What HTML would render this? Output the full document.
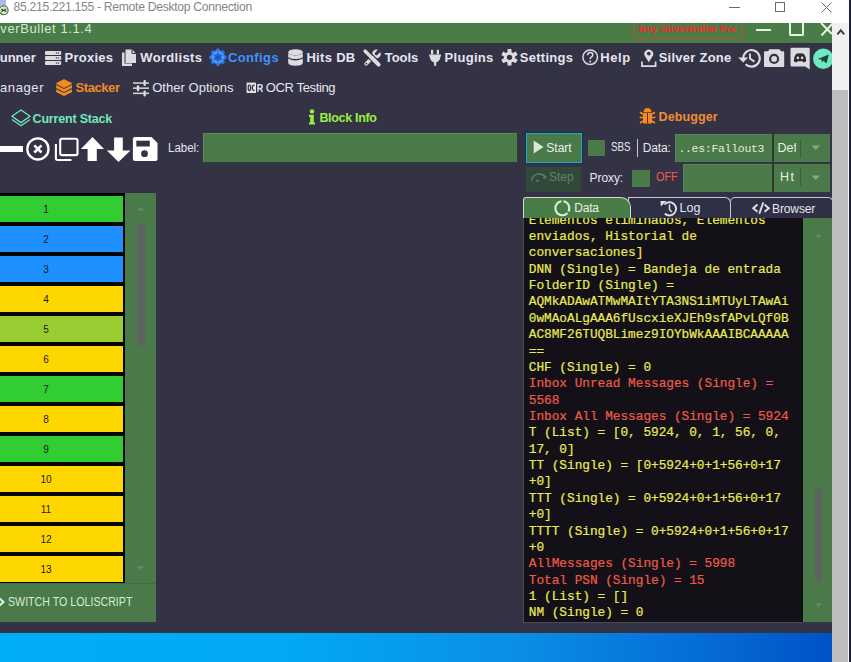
<!DOCTYPE html>
<html><head><meta charset="utf-8">
<style>
*{margin:0;padding:0;box-sizing:border-box}
html,body{width:851px;height:662px;overflow:hidden;background:#343345;font-family:"Liberation Sans",sans-serif}
.a{position:absolute}
.t{position:absolute;white-space:pre;line-height:1}
svg{position:absolute;overflow:visible}
#data{position:absolute;left:523px;top:218px;width:280px;height:405px;background:#131117;overflow:hidden;border-left:1px solid #4a4a56;border-bottom:1px solid #4a4a56}
#data .ln{position:absolute;left:4.8px;-webkit-text-stroke:0.2px currentColor;font-family:"Liberation Mono",monospace;font-size:12.8px;white-space:pre;line-height:1;color:#eaea58;letter-spacing:-0.04px}
#data .r{color:#ee5a4a}
.row{position:absolute;left:0;width:123px;height:26px;color:#1a1a1a;font-size:10px;line-height:26px}
.row span{position:absolute;left:46px;top:1px;transform:translateX(-50%)}
</style></head>
<body>
<!-- RDP title bar -->
<div class="a" style="left:0;top:0;width:851px;height:23px;background:#fff"></div>
<svg style="left:0;top:0" width="12" height="16" viewBox="0 0 12 16">
 <rect x="-1" y="-1" width="7" height="6.5" fill="#a9b9ea"/>
 <circle cx="3.6" cy="10.2" r="4.5" fill="#d4ecc4" stroke="#4a524a" stroke-width="1.1"/>
 <path d="M1.4 9 L3.2 10.3 L1.4 11.6 M6 9 L4.2 10.3 L6 11.6" stroke="#206420" stroke-width="1.3" fill="none"/>
</svg>
<div class="t" style="left:13.5px;top:1.25px;font-size:12.17px;letter-spacing:-0.293px;font-family:'Liberation Sans',sans-serif;font-weight:normal;color:#858585">85.215.221.155 - Remote Desktop Connection</div>
<div class="a" style="left:729px;top:7px;width:11px;height:1px;background:#6a6a6a"></div>
<div class="a" style="left:775px;top:2px;width:10px;height:10px;border:1px solid #6a6a6a"></div>
<svg style="left:821px;top:2px" width="11" height="11" viewBox="0 0 11 11"><path d="M0.5 0.5 L10.5 10.5 M10.5 0.5 L0.5 10.5" stroke="#6a6a6a" stroke-width="1"/></svg>

<!-- green app title -->
<div class="a" style="left:0;top:23px;width:832px;height:20px;background:#4a7c48"></div>
<div class="t" style="left:0.3px;top:21.75px;font-size:13.0px;letter-spacing:0.6px;font-family:'Liberation Sans',sans-serif;font-weight:normal;color:#d2ead2">verBullet 1.1.4</div>
<div class="a" style="left:632.5px;top:23px;width:110.5px;height:16px;border:1px solid #a85a3a;border-top:none"></div><div class="a" style="left:635px;top:23px;width:105.5px;height:13.5px;border:1px solid #7a6a40;border-top:none;opacity:.7"></div>
<div class="t" style="left:638.7px;top:23.53px;font-size:9.5px;letter-spacing:0.332px;font-family:'Liberation Sans',sans-serif;font-weight:bold;color:#e8302a;-webkit-text-stroke:0.25px #e8302a">Buy SilverBullet Pro</div>
<div class="a" style="left:756px;top:29px;width:15px;height:2px;background:#e4f4e4"></div>
<div class="a" style="left:789px;top:23px;width:15px;height:12.5px;border:2px solid #e4f4e4;border-top:none;border-radius:0 0 2px 2px"></div>
<svg style="left:821px;top:23px" width="11" height="13" viewBox="0 0 11 13"><path d="M0.5 12.5 L12 0 M0 0 L11 11" stroke="#e4f4e4" stroke-width="2"/></svg>

<!-- nav bar icons -->
<svg style="left:45px;top:51px" width="16" height="14" viewBox="0 0 16 14">
 <rect x="0" y="0" width="16.2" height="3.9" rx="1" fill="#dcdce0"/>
 <rect x="0" y="5" width="16.2" height="3.9" rx="1" fill="#dcdce0"/>
 <rect x="0" y="10" width="16.2" height="3.9" rx="1" fill="#dcdce0"/>
 <g fill="#4a4a55"><circle cx="11.5" cy="2" r=".8"/><circle cx="13.5" cy="2" r=".8"/><circle cx="11.5" cy="7" r=".8"/><circle cx="13.5" cy="7" r=".8"/><circle cx="11.5" cy="12" r=".8"/><circle cx="13.5" cy="12" r=".8"/></g>
</svg>
<div class="t" style="left:-9.7px;top:50.65px;font-size:13.0px;letter-spacing:0.0px;font-family:'Liberation Sans',sans-serif;font-weight:bold;color:#e6e6ee">Runner</div><div class="t" style="left:64.6px;top:50.65px;font-size:13.0px;letter-spacing:0.25px;font-family:'Liberation Sans',sans-serif;font-weight:bold;color:#e6e6ee">Proxies</div>
<svg style="left:121px;top:49px" width="16" height="18" viewBox="0 0 16 18">
 <path d="M1 3.5 H3.5 V14.5 H11 V17 H1 Z" fill="#dcdce0"/>
 <path d="M4.5 0.5 H11 L15 4.5 V14 H4.5 Z" fill="#dcdce0"/>
 <path d="M11 0.5 V4.5 H15" fill="none" stroke="#343345" stroke-width="1"/>
</svg>
<div class="t" style="left:140.3px;top:50.65px;font-size:13.0px;letter-spacing:0.337px;font-family:'Liberation Sans',sans-serif;font-weight:bold;color:#e6e6ee">Wordlists</div>
<svg style="left:209px;top:48px" width="18" height="19" viewBox="0 0 18 19">
 <g transform="translate(8.9,9.2)">
  <circle r="7.3" fill="#2c7cf0"/>
  <g fill="#2c7cf0">
   <rect x="-1.5" y="-8.6" width="3" height="3" transform="rotate(0)"/>
   <rect x="-1.5" y="-8.6" width="3" height="3" transform="rotate(45)"/>
   <rect x="-1.5" y="-8.6" width="3" height="3" transform="rotate(90)"/>
   <rect x="-1.5" y="-8.6" width="3" height="3" transform="rotate(135)"/>
   <rect x="-1.5" y="-8.6" width="3" height="3" transform="rotate(180)"/>
   <rect x="-1.5" y="-8.6" width="3" height="3" transform="rotate(225)"/>
   <rect x="-1.5" y="-8.6" width="3" height="3" transform="rotate(270)"/>
   <rect x="-1.5" y="-8.6" width="3" height="3" transform="rotate(315)"/>
  </g>
  <circle r="5" fill="none" stroke="#5eaaff" stroke-width="1.4"/>
  <circle r="2.2" fill="#1a55c0"/>
  <path d="M0 -5 V5 M-4.3 -2.5 L4.3 2.5 M-4.3 2.5 L4.3 -2.5" stroke="#1a55c0" stroke-width="1.1"/>
 </g>
</svg>
<div class="t" style="left:227.9px;top:50.65px;font-size:13.0px;letter-spacing:0.4px;font-family:'Liberation Sans',sans-serif;font-weight:bold;color:#3b94ff">Configs</div>
<svg style="left:288px;top:49px" width="15" height="17" viewBox="0 0 15 17">
 <ellipse cx="7.5" cy="3.2" rx="7.3" ry="3" fill="#dcdce0"/>
 <path d="M0.2 4.5 Q7.5 8.5 14.8 4.5 V8.2 Q7.5 12 0.2 8.2 Z" fill="#dcdce0"/>
 <path d="M0.2 9.5 Q7.5 13.3 14.8 9.5 V13.5 Q14.8 16.8 7.5 16.8 Q0.2 16.8 0.2 13.5 Z" fill="#dcdce0"/>
</svg>
<div class="t" style="left:306.4px;top:50.65px;font-size:13.0px;letter-spacing:0.317px;font-family:'Liberation Sans',sans-serif;font-weight:bold;color:#e6e6ee">Hits DB</div>
<svg style="left:363px;top:49px" width="19" height="18" viewBox="0 0 19 18">
 <path d="M11.5 6.5 L3.2 14.8" stroke="#dcdce0" stroke-width="3.7" stroke-linecap="round"/>
 <circle cx="3.4" cy="14.6" r=".9" fill="#343345"/>
 <circle cx="13.4" cy="5" r="4.4" fill="#dcdce0"/>
 <path d="M13.4 4.6 L18.5 -0.5" stroke="#343345" stroke-width="3.2" stroke-linecap="round"/>
 <path d="M5.5 5.5 L12.5 12.5" stroke="#343345" stroke-width="6.4"/>
 <path d="M2 2 L9 9" stroke="#dcdce0" stroke-width="3.2" stroke-linecap="round"/>
 <path d="M8.5 8.5 L15.6 15.6" stroke="#dcdce0" stroke-width="4" stroke-linecap="round"/>
</svg>
<div class="t" style="left:384.7px;top:50.65px;font-size:13.0px;letter-spacing:-0.025px;font-family:'Liberation Sans',sans-serif;font-weight:bold;color:#e6e6ee">Tools</div>
<svg style="left:429px;top:49px" width="13" height="17" viewBox="0 0 13 17">
 <rect x="2" y="0.8" width="2.2" height="4.5" fill="#dcdce0"/>
 <rect x="7.8" y="0.8" width="2.2" height="4.5" fill="#dcdce0"/>
 <path d="M0 5.5 H12.2 L10.5 11 Q8.5 13.5 6.1 13.5 Q3.7 13.5 1.7 11 Z" fill="#dcdce0"/>
 <rect x="5.1" y="12" width="2.1" height="4.8" fill="#dcdce0"/>
</svg>
<div class="t" style="left:444.5px;top:50.65px;font-size:13.0px;letter-spacing:0.317px;font-family:'Liberation Sans',sans-serif;font-weight:bold;color:#e6e6ee">Plugins</div>
<svg style="left:501px;top:49px" width="17" height="17" viewBox="0 0 17 17">
 <g transform="translate(8.5,8.3)">
  <circle r="5.6" fill="#dcdce0"/>
  <g fill="#dcdce0">
   <rect x="-2" y="-8.3" width="4" height="4" rx=".5"/>
   <rect x="-2" y="-8.3" width="4" height="4" rx=".5" transform="rotate(60)"/>
   <rect x="-2" y="-8.3" width="4" height="4" rx=".5" transform="rotate(120)"/>
   <rect x="-2" y="-8.3" width="4" height="4" rx=".5" transform="rotate(180)"/>
   <rect x="-2" y="-8.3" width="4" height="4" rx=".5" transform="rotate(240)"/>
   <rect x="-2" y="-8.3" width="4" height="4" rx=".5" transform="rotate(300)"/>
  </g>
  <circle r="2.6" fill="#343345"/>
 </g>
</svg>
<div class="t" style="left:519.8px;top:50.65px;font-size:13.0px;letter-spacing:0.257px;font-family:'Liberation Sans',sans-serif;font-weight:bold;color:#e6e6ee">Settings</div>
<svg style="left:582px;top:49px" width="17" height="17" viewBox="0 0 17 17">
 <circle cx="8.2" cy="8.2" r="7.3" fill="none" stroke="#dcdce0" stroke-width="1.5"/>
 <path d="M5.6 6.2 Q5.8 3.5 8.3 3.5 Q10.8 3.5 10.8 5.8 Q10.8 7.3 9.2 8.2 Q8.2 8.8 8.2 10.2" fill="none" stroke="#dcdce0" stroke-width="1.5"/>
 <circle cx="8.2" cy="12.4" r="1" fill="#dcdce0"/>
</svg>
<div class="t" style="left:600.3px;top:50.65px;font-size:13.0px;letter-spacing:0.6px;font-family:'Liberation Sans',sans-serif;font-weight:bold;color:#e6e6ee">Help</div>
<svg style="left:641px;top:48px" width="17" height="20" viewBox="0 0 17 20">
 <path d="M7.8 14.3 L4.2 8.6 A4.4 4.4 0 1 1 11.4 8.6 Z" fill="#dcdce0"/>
 <circle cx="7.8" cy="5.6" r="1.9" fill="#343345"/>
 <path d="M0.9 13.6 V18.2 H14.6 V13.6" fill="none" stroke="#dcdce0" stroke-width="1.7"/>
</svg>
<div class="t" style="left:658.7px;top:50.65px;font-size:13.0px;letter-spacing:0.25px;font-family:'Liberation Sans',sans-serif;font-weight:bold;color:#e6e6ee">Silver Zone</div>
<svg style="left:737px;top:48px" width="24" height="21" viewBox="0 0 24 21">
 <path d="M6.2 10 A8.3 8.3 0 1 1 8.6 16.2" fill="none" stroke="#dcdce0" stroke-width="2.1"/>
 <path d="M1.2 9.4 L11.2 9.4 L6.2 14.4 Z" fill="#dcdce0"/>
 <path d="M13 5.5 V10.5 L17.4 13.6" fill="none" stroke="#dcdce0" stroke-width="1.9"/>
</svg>
<svg style="left:764px;top:49px" width="21" height="19" viewBox="0 0 21 19">
 <path d="M4 2.3 L5.5 0.3 H15.5 L17 2.3 H19.3 Q20.2 2.3 20.2 3.3 V17 Q20.2 18 19.3 18 H1 Q0 18 0 17 V3.3 Q0 2.3 1 2.3 Z" fill="#dcdce0"/>
 <circle cx="10.1" cy="9.9" r="4" fill="none" stroke="#343345" stroke-width="2.2"/>
</svg>
<svg style="left:790px;top:47px" width="21" height="23" viewBox="0 0 21 23">
 <path d="M1.5 0.7 H18.5 Q19.7 0.7 19.7 2 V22.4 L15.2 19.6 H1.8 Q0.5 19.6 0.5 18.3 V2 Q0.5 0.7 1.5 0.7 Z" fill="#dcdce0"/>
 <path d="M6.2 6.8 Q10 5.8 13.8 6.8 Q16.6 10.2 16.2 14.3 Q14.8 15.3 13.2 15.4 L12.3 13.9 Q10 14.6 7.7 13.9 L6.8 15.4 Q5.2 15.3 3.8 14.3 Q3.4 10.2 6.2 6.8 Z" fill="#2a2a32"/>
 <circle cx="7.9" cy="10.9" r="1.3" fill="#dcdce0"/>
 <circle cx="12.1" cy="10.9" r="1.3" fill="#dcdce0"/>
</svg>
<svg style="left:813px;top:48px" width="22" height="22" viewBox="0 0 22 22">
 <circle cx="10.3" cy="10.8" r="10.2" fill="#6ee8c2"/>
 <path d="M4.8 11 L15.8 6.5 L13.5 15.5 L10.5 12.8 L9 14.2 L8.5 11.8 Z" fill="#1b4636"/>
</svg>

<!-- sub bar -->
<div class="t" style="left:-11.4px;top:80.65px;font-size:13.0px;letter-spacing:0.6px;font-family:'Liberation Sans',sans-serif;font-weight:normal;color:#e6e6ee">Manager</div>
<svg style="left:56px;top:79px" width="17" height="18" viewBox="0 0 17 18">
 <path d="M8 0.6 L16 4.6 L8 8.6 L0.2 4.6 Z" fill="#f58b1f" stroke="#f58b1f" stroke-width=".8" stroke-linejoin="round"/>
 <path d="M0.2 6 L8 9.9 L16 6 V9 L8 12.9 L0.2 9 Z" fill="#f58b1f"/>
 <path d="M0.2 10.2 L8 14.1 L16 10.2 V13 L8 16.9 L0.2 13 Z" fill="#f58b1f"/>
</svg>
<div class="t" style="left:75.5px;top:80.65px;font-size:13.0px;letter-spacing:-0.417px;font-family:'Liberation Sans',sans-serif;font-weight:bold;color:#f28a2a">Stacker</div>
<svg style="left:132px;top:79px" width="18" height="18" viewBox="0 0 18 18">
 <g fill="#d8d8dc">
  <rect x="1" y="3.3" width="16" height="1.5"/><rect x="1" y="8.4" width="16" height="1.5"/><rect x="1" y="13.6" width="16" height="1.5"/>
  <rect x="11.5" y="1" width="2.4" height="6" rx="1"/><rect x="4.8" y="6.2" width="2.4" height="6" rx="1"/><rect x="11.5" y="11.5" width="2.4" height="6" rx="1"/>
 </g>
</svg>
<div class="t" style="left:152.2px;top:80.65px;font-size:13.0px;letter-spacing:0.033px;font-family:'Liberation Sans',sans-serif;font-weight:normal;color:#e6e6ee">Other Options</div>
<svg style="left:246px;top:82px" width="18" height="12" viewBox="0 0 18 12">
 <rect x="0.6" y="0.6" width="9.4" height="10.4" fill="#e0e0e6"/>
 <path d="M3.4 3 Q2.2 3 2.2 5.8 Q2.2 8.6 3.4 8.6 Q4.6 8.6 4.6 5.8 Q4.6 3 3.4 3 Z M8.5 3.2 Q6.3 3 6.3 5.8 Q6.3 8.6 8.5 8.4" fill="none" stroke="#2a2a34" stroke-width="1.2"/>
 <path d="M12 9.8 V2.8 H14.5 Q16.2 2.8 16.2 4.8 Q16.2 6.5 14.5 6.5 H12 M14.3 6.5 L16.5 9.8" fill="none" stroke="#e0e0e6" stroke-width="1.5"/>
</svg>
<div class="t" style="left:265.7px;top:80.65px;font-size:13.0px;letter-spacing:-0.36px;font-family:'Liberation Sans',sans-serif;font-weight:normal;color:#e6e6ee">OCR Testing</div>

<!-- section headers -->
<svg style="left:11px;top:109px" width="21" height="18" viewBox="0 0 21 18">
 <path d="M10 1 L19 7.3 L10 13.6 L1 7.3 Z" fill="none" stroke="#70e8c0" stroke-width="1.3"/>
 <path d="M1 10.5 L10 16.8 L19 10.5" fill="none" stroke="#70e8c0" stroke-width="1.3"/>
</svg>
<div class="t" style="left:32.6px;top:112.78px;font-size:12.5px;letter-spacing:-0.192px;font-family:'Liberation Sans',sans-serif;font-weight:bold;color:#70e8bc">Current Stack</div>
<svg style="left:308px;top:109px" width="8" height="16" viewBox="0 0 8 16">
 <circle cx="4" cy="2.4" r="2.2" fill="#98ee40"/>
 <path d="M1 5.8 H5.8 V13.5 H7 V15.6 H1 V13.5 H2.2 V8 H1 Z" fill="#98ee40"/>
</svg>
<div class="t" style="left:319.4px;top:111.97px;font-size:12.5px;letter-spacing:-0.311px;font-family:'Liberation Sans',sans-serif;font-weight:bold;color:#98ee40">Block Info</div>
<svg style="left:639px;top:107px" width="17" height="17" viewBox="0 0 17 17">
 <path d="M4.5 5 Q4.8 1 8.5 1 Q12.2 1 12.5 5 Z" fill="#f58b1f"/>
 <rect x="4" y="5.8" width="9" height="10.8" rx="1" fill="#f58b1f"/>
 <g stroke="#f58b1f" stroke-width="1.6">
  <path d="M4 7 L1 5.2 M4 10.5 L0.6 10.5 M4 14 L1 16 M13 7 L16 5.2 M13 10.5 L16.4 10.5 M13 14 L16 16"/>
 </g>
 <path d="M8.5 6 V16.5" stroke="#6a2a08" stroke-width="1"/>
</svg>
<div class="t" style="left:658.5px;top:110.58px;font-size:12.5px;letter-spacing:0.114px;font-family:'Liberation Sans',sans-serif;font-weight:bold;color:#f28c34">Debugger</div>

<!-- toolbar -->
<div class="a" style="left:0;top:146px;width:23px;height:5.5px;background:#fff"></div>
<svg style="left:26px;top:137px" width="24" height="24" viewBox="0 0 24 24">
 <circle cx="11.9" cy="11.9" r="10.6" fill="none" stroke="#fff" stroke-width="2.3"/>
 <path d="M8.3 8.3 L15.5 15.5 M15.5 8.3 L8.3 15.5" stroke="#fff" stroke-width="2.6"/>
</svg>
<svg style="left:54px;top:137px" width="25" height="25" viewBox="0 0 25 25">
 <path d="M1.9 7 V21.3 Q1.9 23 3.6 23 H17.5" fill="none" stroke="#fff" stroke-width="2.1"/>
 <rect x="6.2" y="1.8" width="17.3" height="16.3" rx="1.8" fill="none" stroke="#fff" stroke-width="2.1"/>
</svg>
<svg style="left:80px;top:136px" width="25" height="26" viewBox="0 0 25 26">
 <path d="M12.5 0.9 L24 12.9 H16.8 V25 H7.6 V12.9 H0.9 Z" fill="#fff"/>
</svg>
<svg style="left:106px;top:136px" width="25" height="27" viewBox="0 0 25 27">
 <path d="M8.1 1.4 H16.8 V14.4 H24.5 L12.5 25.9 L0.9 14.4 H8.1 Z" fill="#fff"/>
</svg>
<svg style="left:132px;top:136px" width="26" height="26" viewBox="0 0 26 26">
 <path d="M2.9 0.9 H19.5 L25.5 6.9 V23 Q25.5 25 23.5 25 H2.9 Q0.9 25 0.9 23 V2.9 Q0.9 0.9 2.9 0.9 Z" fill="#fff"/>
 <rect x="4.3" y="4.7" width="13.5" height="5.8" fill="#343345"/>
 <circle cx="12.5" cy="17.7" r="3.4" fill="#343345"/>
</svg>
<div class="t" style="left:167.58px;top:142.38px;font-size:12.5px;letter-spacing:0.0px;font-family:'Liberation Sans',sans-serif;font-weight:normal;color:#e6e6ee;transform:scaleX(0.9188);transform-origin:0 0">Label:</div>
<div class="a" style="left:203px;top:133px;width:314px;height:29px;background:#4a7a4a;box-shadow:0 0 0 1px #2e3c32,inset 1px 1px 0 #62886a"></div>

<!-- stack list -->
<div class="a" style="left:0;top:193px;width:125px;height:390px;background:#050505"></div>
<div class="a" style="left:125px;top:193px;width:31px;height:428px;background:#4a7a4a"></div>
<div class="a" style="left:137px;top:223.5px;width:7.5px;height:121px;background:#5e6260"></div>
<svg style="left:136px;top:205px" width="10" height="7" viewBox="0 0 10 7"><path d="M1 5.5 L4.5 1.5 L8 5.5 Z" fill="#62866a"/></svg>
<svg style="left:136px;top:565px" width="10" height="7" viewBox="0 0 10 7"><path d="M1 1 L4.5 5.5 L8 1 Z" fill="#62866a"/></svg>
<div id="rows">
<div class="row" style="top:196px;background:#32cd32"><span>1</span></div>
<div class="row" style="top:226px;background:#1e90ff"><span>2</span></div>
<div class="row" style="top:256px;background:#1e90ff"><span>3</span></div>
<div class="row" style="top:286px;background:#ffd700"><span>4</span></div>
<div class="row" style="top:316px;background:#9acd32"><span>5</span></div>
<div class="row" style="top:346px;background:#ffd700"><span>6</span></div>
<div class="row" style="top:376px;background:#32cd32"><span>7</span></div>
<div class="row" style="top:406px;background:#ffd700"><span>8</span></div>
<div class="row" style="top:436px;background:#32cd32"><span>9</span></div>
<div class="row" style="top:466px;background:#ffd700"><span>10</span></div>
<div class="row" style="top:496px;background:#ffd700"><span>11</span></div>
<div class="row" style="top:526px;background:#ffd700"><span>12</span></div>
<div class="row" style="top:556px;background:#ffd700"><span>13</span></div>
</div>

<!-- switch button -->
<div class="a" style="left:0;top:583px;width:156px;height:38.5px;background:#4a7a4a;border-top:1px solid #426c42"></div>
<svg style="left:-6px;top:597px" width="12" height="10" viewBox="0 0 12 10"><path d="M5 1 L9.5 5 L5 9" fill="none" stroke="#e4f4e4" stroke-width="2"/></svg>
<div class="t" style="left:8.15px;top:596.08px;font-size:12.5px;letter-spacing:0.0px;font-family:'Liberation Sans',sans-serif;font-weight:normal;color:#d8ecd8;transform:scaleX(0.8517);transform-origin:0 0">SWITCH TO LOLISCRIPT</div>

<!-- right panel controls -->
<div class="a" style="left:526.4px;top:133px;width:55.5px;height:29.5px;background:#4a7a4a;border:1.8px solid #28a4c4;box-shadow:0 0 0 1.1px #0f3a4a"></div>
<svg style="left:533px;top:140px" width="12" height="15" viewBox="0 0 12 15"><path d="M0.7 0.5 L10.5 7 L0.7 13.6 Z" fill="#d6e8d6"/></svg>
<div class="t" style="left:546.3px;top:141.6px;font-size:12.0px;letter-spacing:0.0px;font-family:'Liberation Sans',sans-serif;font-weight:normal;color:#eaf2ea">Start</div>
<div class="a" style="left:526px;top:166.5px;width:55px;height:25.5px;background:#30493a"></div>
<svg style="left:530px;top:172px" width="18" height="11" viewBox="0 0 18 11">
 <path d="M1.5 8.5 Q3 2 9 2 Q13 2 15 5" fill="none" stroke="#5d7a66" stroke-width="1.5"/>
 <path d="M12.5 6.5 L16.5 6.5 L16 3 Z" fill="#5d7a66"/>
 <circle cx="7.5" cy="8.7" r="1.3" fill="#5d7a66"/>
</svg>
<div class="t" style="left:548.9px;top:171.4px;font-size:12.0px;letter-spacing:0.067px;font-family:'Liberation Sans',sans-serif;font-weight:normal;color:#62806a">Step</div>
<div class="a" style="left:588px;top:140px;width:17px;height:16px;background:#4a7a4a"></div>
<div class="t" style="left:610.92px;top:141.07px;font-size:12.5px;letter-spacing:0.0px;font-family:'Liberation Sans',sans-serif;font-weight:normal;color:#e6e6ee;transform:scaleX(0.7833);transform-origin:0 0">SBS</div>
<div class="a" style="left:636.5px;top:139px;width:1.5px;height:18px;background:#c8c8d0"></div>
<div class="t" style="left:642.7px;top:141.6px;font-size:12.0px;letter-spacing:-0.125px;font-family:'Liberation Sans',sans-serif;font-weight:normal;color:#e6e6ee">Data:</div>
<div class="a" style="left:675px;top:134px;width:97px;height:28px;background:#4a7a4a;box-shadow:inset 1px 1px 0 #5a845e"></div>
<div class="t" style="left:678.4px;top:143.06px;font-size:11.5px;letter-spacing:-0.3px;font-family:'Liberation Mono',monospace;font-weight:normal;color:#e4ecd8">..es:Fallout3</div>
<div class="a" style="left:774px;top:134px;width:56px;height:28px;background:#4a7a4a"></div>
<div class="a" style="left:800px;top:140px;width:1px;height:18px;background:#3a5e3a"></div>
<svg style="left:811px;top:145px" width="10" height="6" viewBox="0 0 10 6"><path d="M0.5 0.5 L9 0.5 L4.75 5 Z" fill="#88a888"/></svg>
<div class="a" style="left:774px;top:134px;width:22px;height:28px;overflow:hidden"><div style="position:absolute;left:-774px;top:-134px"><div class="t" style="left:777.5px;top:141.57px;font-size:12.5px;letter-spacing:0.0px;font-family:'Liberation Sans',sans-serif;font-weight:normal;color:#e8f0e0">Def</div></div></div>
<div class="t" style="left:589.6px;top:171.6px;font-size:12.0px;letter-spacing:-0.08px;font-family:'Liberation Sans',sans-serif;font-weight:normal;color:#e6e6ee">Proxy:</div>
<div class="a" style="left:632px;top:170px;width:18px;height:16.5px;background:#4a7a4a"></div>
<div class="t" style="left:655.53px;top:171.47px;font-size:12.5px;letter-spacing:0.0px;font-family:'Liberation Sans',sans-serif;font-weight:normal;color:#ee5a50;transform:scaleX(0.8708);transform-origin:0 0">OFF</div>
<div class="a" style="left:683px;top:164px;width:89px;height:28px;background:#4a7a4a;box-shadow:inset 1px 1px 0 #5a845e"></div>
<div class="a" style="left:774px;top:164px;width:56px;height:28px;background:#4a7a4a"></div>
<div class="a" style="left:799.5px;top:168px;width:1px;height:18px;background:#3a5e3a"></div>
<svg style="left:811px;top:175px" width="10" height="6" viewBox="0 0 10 6"><path d="M0.5 0.5 L9 0.5 L4.75 5 Z" fill="#88a888"/></svg>
<div class="a" style="left:772px;top:134px;width:2px;height:58px;background:#2e3a30"></div>
<div class="t" style="left:779.9px;top:171.18px;font-size:12.5px;letter-spacing:1.6px;font-family:'Liberation Sans',sans-serif;font-weight:normal;color:#e8f0e0">Ht</div>

<!-- tabs -->
<div class="a" style="left:730px;top:197px;width:104px;height:22px;background:#2f2f46;border:1.5px solid #c8c8d2;border-bottom:none;border-radius:5px 6px 0 0"></div>
<div class="a" style="left:628px;top:197px;width:103px;height:22px;background:#2f2f46;border:1.5px solid #c8c8d2;border-bottom:none;border-radius:0 6px 0 0"></div>
<div class="a" style="left:523px;top:197px;width:107.5px;height:22px;background:#4a7c48;border:1.5px solid #cfdccf;border-bottom:none;border-radius:3px 10px 0 0"></div>
<svg style="left:554px;top:200px" width="17" height="17" viewBox="0 0 17 17">
 <path d="M9.5 1.3 A7 7 0 0 1 14.5 11.5" fill="none" stroke="#d8eed8" stroke-width="2"/>
 <path d="M13.5 13 A7 7 0 1 1 7.5 1.3" fill="none" stroke="#d8eed8" stroke-width="2"/>
</svg>
<div class="t" style="left:574.2px;top:202.4px;font-size:12.0px;letter-spacing:-0.2px;font-family:'Liberation Sans',sans-serif;font-weight:normal;color:#e8f2e8">Data</div>
<svg style="left:660px;top:200px" width="17" height="17" viewBox="0 0 17 17">
 <path d="M4.5 4.5 A6.6 6.6 0 1 1 4.8 13.5" fill="none" stroke="#e0e0e6" stroke-width="1.9"/>
 <path d="M0.5 1 L6.5 1 L0.8 6.5 Z" fill="#e0e0e6"/>
 <path d="M9.5 4.5 V9.5 L11.8 12" fill="none" stroke="#e0e0e6" stroke-width="1.5"/>
</svg>
<div class="t" style="left:679.6px;top:202.38px;font-size:12.5px;letter-spacing:0.05px;font-family:'Liberation Sans',sans-serif;font-weight:normal;color:#e6e6ee">Log</div>
<svg style="left:752px;top:202px" width="18" height="13" viewBox="0 0 18 13">
 <path d="M5.5 2.5 L1.2 6.3 L5.5 9.8 M12.5 2.5 L16.8 6.3 L12.5 9.8" fill="none" stroke="#e0e0e6" stroke-width="1.9"/>
 <path d="M11.3 0.3 L7.3 11.8" stroke="#e0e0e6" stroke-width="1.9"/>
</svg>
<div class="t" style="left:772.1px;top:202.5px;font-size:12.0px;letter-spacing:-0.133px;font-family:'Liberation Sans',sans-serif;font-weight:normal;color:#e6e6ee">Browser</div>

<!-- data panel -->
<div id="data">
<div class="ln" style="top:-3.33px">Elementos eliminados, Elementos</div>
<div class="ln" style="top:13.03px">enviados, Historial de</div>
<div class="ln" style="top:29.39px">conversaciones]</div>
<div class="ln" style="top:45.75px">DNN (Single) = Bandeja de entrada</div>
<div class="ln" style="top:62.11px">FolderID (Single) =</div>
<div class="ln" style="top:78.47px">AQMkADAwATMwMAItYTA3NS1iMTUyLTAwAi</div>
<div class="ln" style="top:94.83px">0wMAoALgAAA6fUscxieXJEh9sfAPvLQf0B</div>
<div class="ln" style="top:111.19px">AC8MF26TUQBLimez9IOYbWkAAAIBCAAAAA</div>
<div class="ln" style="top:127.55px">==</div>
<div class="ln" style="top:143.91px">CHF (Single) = 0</div>
<div class="ln r" style="top:160.27px">Inbox Unread Messages (Single) =</div>
<div class="ln r" style="top:176.63px">5568</div>
<div class="ln r" style="top:192.99px">Inbox All Messages (Single) = 5924</div>
<div class="ln" style="top:209.35px">T (List) = [0, 5924, 0, 1, 56, 0,</div>
<div class="ln" style="top:225.71px">17, 0]</div>
<div class="ln" style="top:242.07px">TT (Single) = [0+5924+0+1+56+0+17</div>
<div class="ln" style="top:258.43px">+0]</div>
<div class="ln" style="top:274.79px">TTT (Single) = 0+5924+0+1+56+0+17</div>
<div class="ln" style="top:291.15px">+0]</div>
<div class="ln" style="top:307.51px">TTTT (Single) = 0+5924+0+1+56+0+17</div>
<div class="ln" style="top:323.87px">+0</div>
<div class="ln r" style="top:340.23px">AllMessages (Single) = 5998</div>
<div class="ln r" style="top:356.59px">Total PSN (Single) = 15</div>
<div class="ln" style="top:372.95px">1 (List) = []</div>
<div class="ln" style="top:389.31px">NM (Single) = 0</div>
</div>
<div class="a" style="left:803px;top:218px;width:29px;height:404px;background:#4a7a4a"></div>
<svg style="left:814px;top:232px" width="10" height="7" viewBox="0 0 10 7"><path d="M1 5.5 L4.5 1.5 L8 5.5 Z" fill="#5e8a64"/></svg>
<div class="a" style="left:815px;top:489px;width:7px;height:92px;background:#5e6260"></div>
<svg style="left:814px;top:602px" width="10" height="7" viewBox="0 0 10 7"><path d="M1 1 L4.5 5.5 L8 1 Z" fill="#5e8a64"/></svg>

<!-- right scrollbar -->
<div class="a" style="left:832px;top:23px;width:17px;height:639px;background:#f0f0f0"></div>
<div class="a" style="left:832px;top:90px;width:16px;height:572px;background:#bebebe"></div>
<svg style="left:836px;top:28px" width="10" height="8" viewBox="0 0 10 8"><path d="M1.3 6.3 L4.8 2.3 L8.3 6.3" fill="none" stroke="#404040" stroke-width="1.9"/></svg>
<div class="a" style="left:847.8px;top:23px;width:1px;height:639px;background:#fafafa"></div><div class="a" style="left:848.7px;top:0;width:2.3px;height:662px;background:#1e2030"></div>

<!-- taskbar blue -->
<div class="a" style="left:0;top:632.5px;width:832px;height:30px;background:linear-gradient(90deg,#00aef6 0%,#02a8f4 35%,#0a8ee6 62%,#0670d8 82%,#0052c6 100%)"></div>

</body></html>
